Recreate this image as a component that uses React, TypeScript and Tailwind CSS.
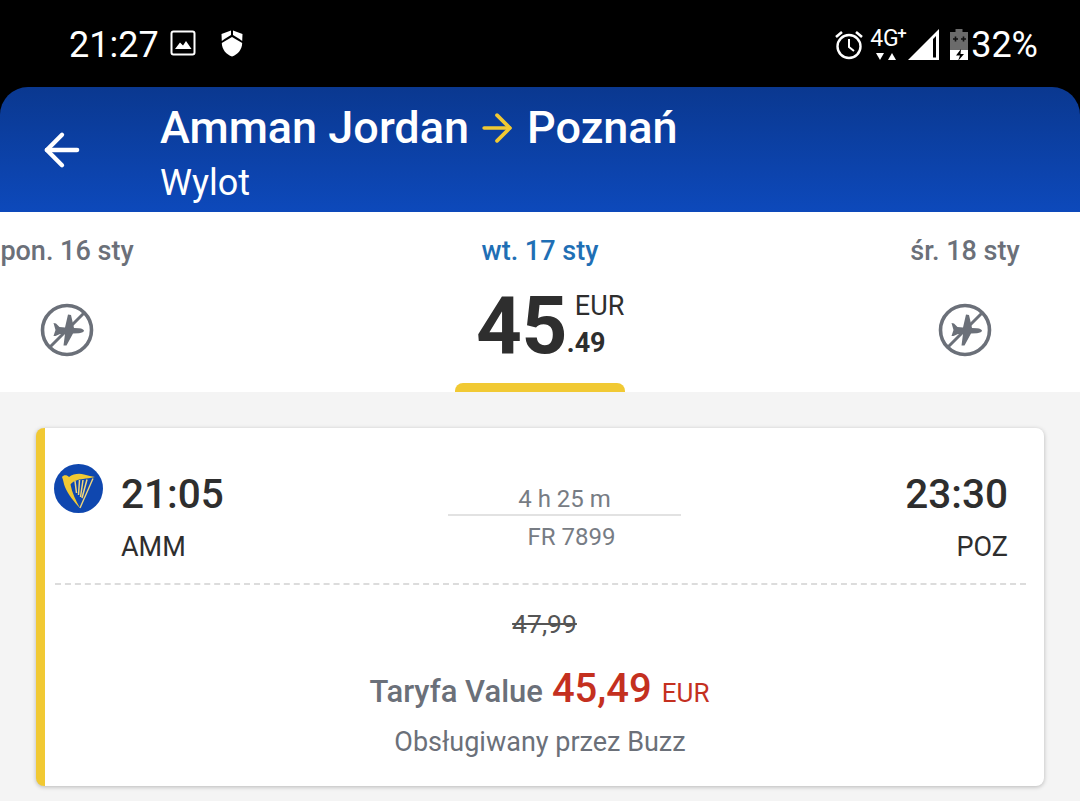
import { ArrowLeft, ArrowRight } from "lucide-react"

function ImageIcon() {
  return (
    <svg width="26" height="26" viewBox="0 0 26 26" fill="none">
      <rect x="1.5" y="1.5" width="23" height="23" rx="2" stroke="white" strokeWidth="2" />
      <path d="M5 19 L10 12.5 L13 15.5 L16 11 L21.5 19 Z" fill="white" />
    </svg>
  )
}

function ShieldIcon() {
  return (
    <svg width="22" height="27" viewBox="0 0 22 27" fill="white">
      <path d="M0.5 4 L10 0.5 V5 L3.5 9 L0.8 11 Z" />
      <path d="M21.5 4 L12 0.5 V5 L18.5 9 L21.2 11 Z" />
      <path d="M0.8 13 L11 7 L21.2 13 C21 20 16.5 24.5 11 26.5 C5.5 24.5 1 20 0.8 13 Z" />
    </svg>
  )
}

function AlarmIcon() {
  return (
    <svg width="28" height="30" viewBox="0 0 28 30" fill="none" stroke="white" strokeWidth="2.4">
      <circle cx="14" cy="16.5" r="11.5" />
      <path d="M14 9 V17 L19 21" strokeWidth="2" />
      <path d="M1 7 L7 2 M27 7 L21 2" strokeWidth="2.6" />
    </svg>
  )
}

function SignalIcon() {
  return (
    <svg width="32" height="32" viewBox="0 0 32 32" fill="white">
      <path d="M0 31 L31 0 V31 Z M25 10 V28.5 H28 V7 Z" fillRule="evenodd" />
    </svg>
  )
}

function BatteryIcon() {
  return (
    <svg width="18" height="32" viewBox="0 0 18 32">
      <path d="M5.5 0 H12.5 V3 H18 V21 H0 V3 H5.5 Z" fill="#6b6b6b" />
      <path d="M0 21 H18 V31 H0 Z" fill="white" />
      <path d="M3 10 H8 M5.5 7.5 V12.5 M11 10 H16 M13.5 7.5 V12.5" stroke="#111" strokeWidth="1.6" />
      <path d="M11 20 L6 26.5 H10 L8 32 L14 25 H10.5 Z" fill="#000" />
    </svg>
  )
}

// no-flights marker used for days without a fare
function NoFlightIcon() {
  return (
    <svg width="54" height="54" viewBox="0 0 54 54" fill="none">
      <circle cx="27" cy="27" r="24.5" stroke="#6b7079" strokeWidth="3.6" />
      <path d="M9.5 44.5 L44.5 9.5" stroke="#6b7079" strokeWidth="3" />
      <path
        d="M13.5 20 L16 20.5 L19.5 24 L25 24.5 L28 11.5 L31 12 L34 25 L39 25.2 C42 25.5 44 26.5 44 27.8 C44 29 42 30 39 30.2 L33 30.5 L26.5 42.5 L23.5 42.5 L25 31 L20 31 L15.5 33 L13.5 33 L15.5 27 Z"
        fill="#6b7079"
      />
    </svg>
  )
}

function RyanairLogo() {
  return (
    <svg width="49" height="49" viewBox="0 0 49 49">
      <circle cx="24.5" cy="24.5" r="24.5" fill="#0f47af" />
      {/* wing and the curved front of the harp */}
      <path
        d="M8 13 C9.5 10.5 13 10.5 15 13 C19 10 25 9 30 10.5 C34 11.5 38 12.5 41 13 C36 14 33 14.5 29 15 C24 15.5 19 17 16.5 20.5 C18 29 22 37 26 44 C20 38 14 30 11 23 C9.5 20 9.5 16 8 13 Z"
        fill="#f1c933"
      />
      {/* strings and back of the harp */}
      <path
        d="M21 17 L22.5 29 M25.5 16 L24.5 31 M29 16 L26.5 33 M33 15.5 L28 34"
        stroke="#f1d67a"
        strokeWidth="1.5"
        fill="none"
      />
      <path d="M39 14.5 L26 44" stroke="#f1d67a" strokeWidth="1.4" fill="none" />
    </svg>
  )
}

function DayTab({ label }: { label: string }) {
  return (
    <div className="flex w-[134px] flex-col items-center">
      <div className="text-[27px] leading-[30px] font-medium whitespace-nowrap text-[#6b7079]">{label}</div>
      <div className="mt-[37px]">
        <NoFlightIcon />
      </div>
    </div>
  )
}

export default function App() {
  return (
    <div className="flex h-[801px] w-[1080px] flex-col overflow-hidden bg-black font-['Roboto',sans-serif]">
      {/* Status bar */}
      <div className="flex h-[87px] shrink-0 items-start justify-between pt-[25px] pr-[42px] pl-[69px] text-white">
        <div className="flex items-center">
          <span className="text-[36px] leading-[40px] font-normal">21:27</span>
          <span className="mb-[4px] ml-[11px]"><ImageIcon /></span>
          <span className="mb-[4px] ml-[25px]"><ShieldIcon /></span>
        </div>
        <div className="flex items-center">
          <AlarmIcon />
          <div className="relative ml-[7px] h-[36px] w-[38px]">
            <span className="absolute top-0 left-0 text-[23px] leading-[24px]">4G</span>
            <span className="absolute top-[-3px] left-[27px] text-[17px] leading-[18px] font-medium">+</span>
            <span className="absolute top-[26px] left-[6px] h-0 w-0 border-x-[4px] border-t-[7px] border-x-transparent border-t-white" />
            <span className="absolute top-[26px] left-[18px] h-0 w-0 border-x-[4px] border-b-[7px] border-x-transparent border-b-white" />
          </div>
          <SignalIcon />
          <span className="ml-[10px]"><BatteryIcon /></span>
          <span className="ml-[3px] text-[36px] leading-[40px]">32%</span>
        </div>
      </div>

      {/* Route header */}
      <header className="flex h-[125px] shrink-0 rounded-t-[28px] bg-gradient-to-b from-[#0a3890] to-[#0d49bb] text-white">
        <div className="flex w-[160px] shrink-0 items-center pl-[36px]">
          <ArrowLeft size={52} strokeWidth={2} color="white" />
        </div>
        <div className="pt-[15px]">
          <div className="flex items-center text-[45px] leading-[52px] font-medium">
            <span>Amman Jordan</span>
            <ArrowRight size={44} strokeWidth={2} color="#f1c933" className="mr-[8px] ml-[6px]" />
            <span>Poznań</span>
          </div>
          <div className="mt-[8px] text-[36px] leading-[42px]">Wylot</div>
        </div>
      </header>

      {/* Day picker */}
      <div className="flex h-[180px] shrink-0 bg-white pt-[24px]">
        <DayTab label="pon. 16 sty" />
        <div className="ml-[321px] flex w-[170px] flex-col items-center">
          <div className="text-[27px] leading-[30px] font-medium whitespace-nowrap text-[#1f6fb5]">wt. 17 sty</div>
          <div className="mt-[13px] flex h-[104px] w-full items-start pt-[1px] text-[#2e2e2e]">
            <span className="ml-[21px] text-[80px] leading-[92px] font-bold tracking-[-0.5px]">45</span>
            <div className="ml-[8px] pt-[10px]">
              <div className="text-[27px] leading-[32px]">EUR</div>
              <div className="mt-[6px] -ml-[8px] text-[27px] leading-[30px] font-bold">.49</div>
            </div>
          </div>
          <div className="h-[9px] w-full rounded-t-[8px] bg-[#f1c933]" />
        </div>
        <div className="ml-[273px]">
          <DayTab label="śr. 18 sty" />
        </div>
      </div>

      {/* Flight list */}
      <div className="flex-1 bg-[#f4f4f4] pt-[36px] pl-[36px]">
        <div className="h-[358px] w-[1008px] rounded-[8px] border-l-[9px] border-[#f1c933] bg-white shadow-[0_1px_4px_rgba(0,0,0,0.25)]">
          <div className="flex h-[155px] items-start pt-[36px] pr-[36px] pl-[9px]">
            <RyanairLogo />
            <div className="ml-[18px] w-[327px]">
              <div className="mt-[1px] text-[40.5px] leading-[58px] font-medium text-[#2e2e2e]">21:05</div>
              <div className="mt-[9px] text-[27px] leading-[30px] text-[#2e2e2e]">AMM</div>
            </div>
            <div className="flex w-[233px] flex-col items-center text-[#777c84]">
              <div className="mt-[20px] text-[24px] leading-[30px]">4 h 25 m</div>
              <div className="h-[2px] w-full bg-[#e2e2e2]" />
              <div className="mt-[6px] ml-[14px] text-[24px] leading-[30px]">FR 7899</div>
            </div>
            <div className="ml-auto flex flex-col items-end text-[#2e2e2e]">
              <div className="mt-[1px] text-[40.5px] leading-[58px] font-medium">23:30</div>
              <div className="mt-[9px] text-[27px] leading-[30px]">POZ</div>
            </div>
          </div>
          <div className="mr-[18px] ml-[10px] border-t-2 border-dashed border-[#dcdcdc]" />
          <div className="flex flex-col items-center pr-[10px] text-[#6b7079]">
            <div className="mt-[21px] ml-[10px] text-[26.5px] leading-[36px] text-[#555] line-through">47,99</div>
            <div className="mt-[25px] flex items-baseline">
              <span className="text-[31px] leading-[44px] font-medium">Taryfa Value</span>
              <span className="ml-[9px] text-[40px] leading-[44px] font-medium text-[#c4301f]">45,49</span>
              <span className="ml-[10px] text-[26px] leading-[44px] text-[#c4301f]">EUR</span>
            </div>
            <div className="mt-[9px] ml-[1px] text-[27px] leading-[36px]">Obsługiwany przez Buzz</div>
          </div>
        </div>
      </div>
    </div>
  )
}
